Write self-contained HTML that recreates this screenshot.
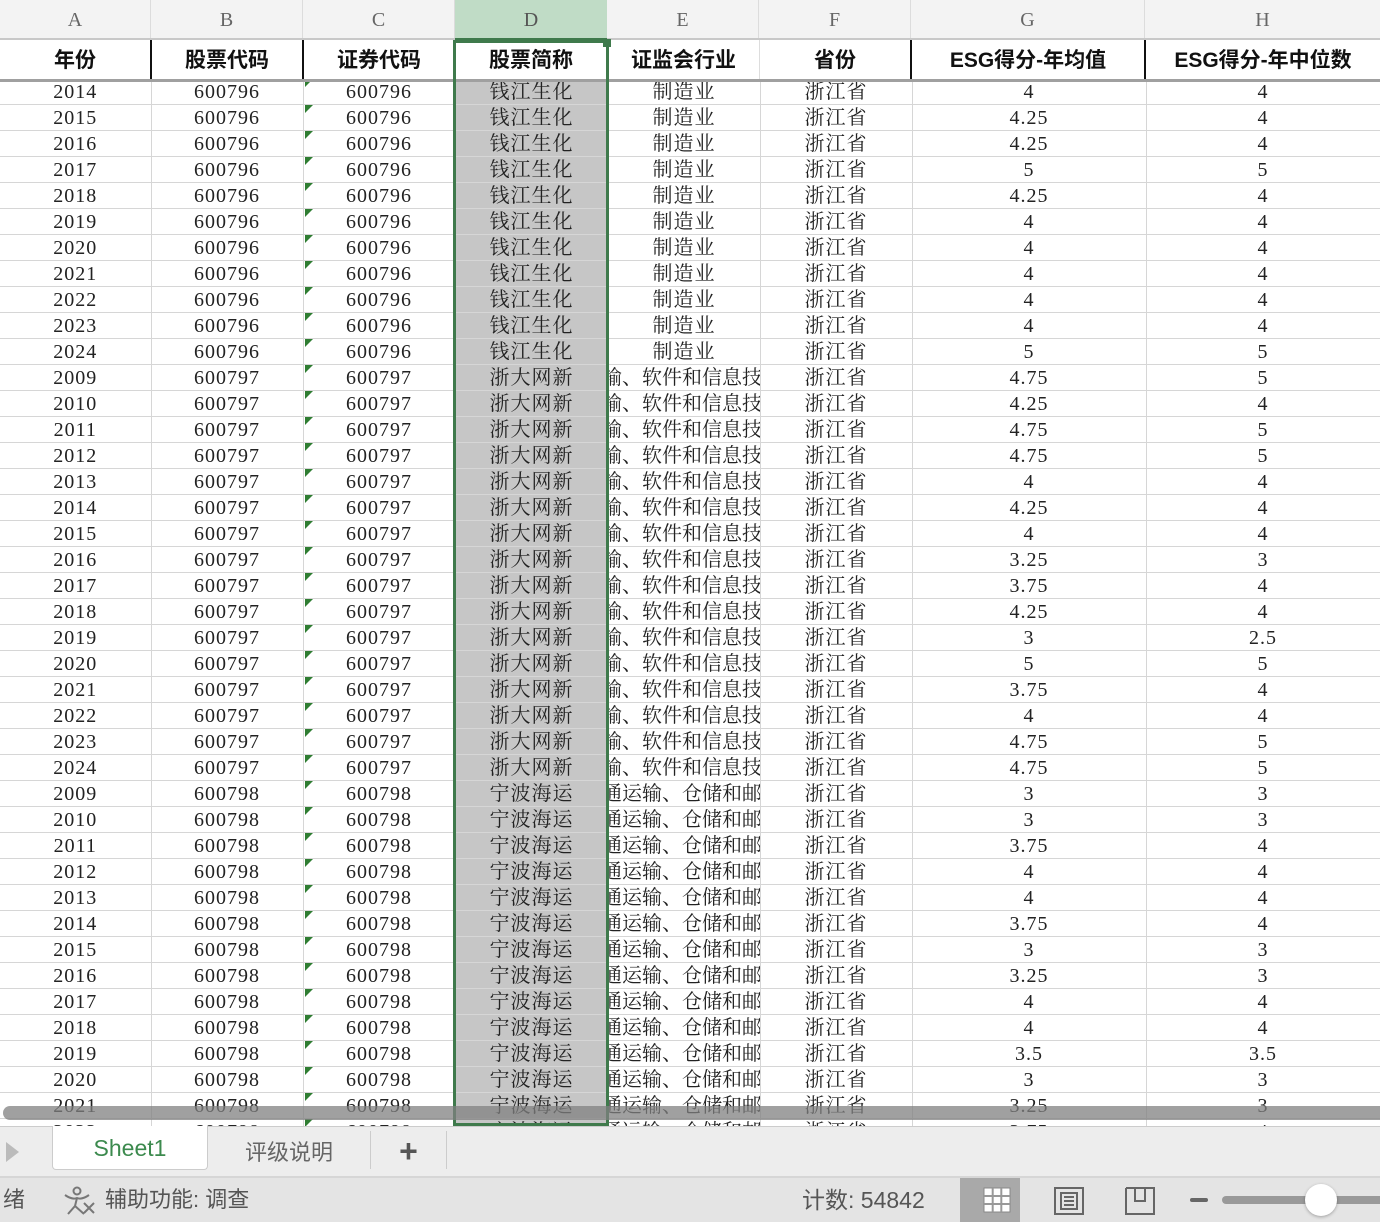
<!DOCTYPE html>
<html><head><meta charset="utf-8">
<style>
html,body{margin:0;padding:0;width:1380px;height:1222px;overflow:hidden;background:#fff;position:relative;font-family:"Liberation Serif","Noto Serif CJK SC",serif;}
.colhdr{position:absolute;left:0;top:0;width:1380px;height:40px;background:#f3f3f3;border-bottom:2px solid #c8c8c8;box-sizing:border-box;}
.colhdr div{position:absolute;top:0;height:38px;line-height:40px;text-align:center;color:#666;font-size:20px;border-right:1px solid #dcdcdc;box-sizing:border-box;}
.hdr{position:absolute;left:0;top:40px;width:1380px;height:42px;border-bottom:3px solid #a0a0a0;box-sizing:border-box;background:#fff;}
.hdr div{position:absolute;top:0;height:39px;line-height:42px;text-align:center;font-family:"Liberation Sans","Noto Sans CJK SC",sans-serif;font-weight:bold;font-size:21px;color:#111;border-right:2px solid #111;box-sizing:border-box;}
.data{position:absolute;left:0;top:82px;width:1380px;height:1044px;overflow:hidden;}
table{border-collapse:collapse;table-layout:fixed;margin-top:-3px;width:1380px;}
td{height:23px;padding:2px 0 0 0;border-bottom:1px solid #d6d6d6;border-right:1px solid #d6d6d6;text-align:center;font-size:20px;line-height:23px;color:#222;white-space:nowrap;overflow:hidden;position:relative;letter-spacing:1px;}
td.c:before{content:"";position:absolute;left:1px;top:0;width:0;height:0;border-top:8px solid #2f7d32;border-right:8px solid transparent;}
td.d{background:#c6c6c6;}
td.e span{position:absolute;left:50%;top:2px;margin-left:8px;transform:translateX(-50%);white-space:nowrap;letter-spacing:0;}
.sel{position:absolute;left:453px;top:40px;width:156px;height:1086px;border:3px solid #3f7a4c;box-sizing:border-box;}
.dh{position:absolute;left:455px;top:0;width:152px;height:40px;background:#c0dcc6;color:#555;font-size:20px;text-align:center;line-height:40px;border-bottom:2px solid #3f7a4c;box-sizing:border-box;}
.handle{position:absolute;left:603px;top:39px;width:8px;height:8px;background:#3f7a4c;}
.scroll{position:absolute;left:3px;top:1106px;width:1390px;height:14px;border-radius:7px;background:rgba(128,128,128,0.75);}
.tabs{position:absolute;left:0;top:1126px;width:1380px;height:52px;background:#ededed;border-top:1px solid #ccc;border-bottom:2px solid #d6d6d6;box-sizing:border-box;font-family:"Liberation Sans","Noto Sans CJK SC",sans-serif;}
.status{position:absolute;left:0;top:1178px;width:1380px;height:44px;background:#e4e4e4;font-family:"Liberation Sans","Noto Sans CJK SC",sans-serif;color:#555;font-size:22px;}
</style></head><body>
<div class="colhdr">
<div style="left:0;width:151px">A</div><div style="left:151px;width:152px">B</div><div style="left:303px;width:152px">C</div><div style="left:455px;width:152px">D</div><div style="left:607px;width:152px">E</div><div style="left:759px;width:152px">F</div><div style="left:911px;width:234px">G</div><div style="left:1145px;width:235px;border:none">H</div>
</div>
<div class="dh">D</div>
<div class="hdr">
<div style="left:0;width:152px">年份</div><div style="left:152px;width:152px">股票代码</div><div style="left:304px;width:152px">证券代码</div><div style="left:456px;width:152px;border-right-color:#3f7a4c">股票简称</div><div style="left:608px;width:152px;border-right:1px solid #ddd">证监会行业</div><div style="left:760px;width:152px">省份</div><div style="left:912px;width:234px">ESG得分-年均值</div><div style="left:1146px;width:234px;border:none">ESG得分-年中位数</div>
</div>
<div class="data">
<table>
<colgroup><col style="width:151px"><col style="width:152px"><col style="width:152px"><col style="width:153px"><col style="width:152px"><col style="width:152px"><col style="width:234px"><col style="width:234px"></colgroup>
<tr><td>2014</td><td>600796</td><td class="c">600796</td><td class="d">钱江生化</td><td>制造业</td><td>浙江省</td><td>4</td><td>4</td></tr>
<tr><td>2015</td><td>600796</td><td class="c">600796</td><td class="d">钱江生化</td><td>制造业</td><td>浙江省</td><td>4.25</td><td>4</td></tr>
<tr><td>2016</td><td>600796</td><td class="c">600796</td><td class="d">钱江生化</td><td>制造业</td><td>浙江省</td><td>4.25</td><td>4</td></tr>
<tr><td>2017</td><td>600796</td><td class="c">600796</td><td class="d">钱江生化</td><td>制造业</td><td>浙江省</td><td>5</td><td>5</td></tr>
<tr><td>2018</td><td>600796</td><td class="c">600796</td><td class="d">钱江生化</td><td>制造业</td><td>浙江省</td><td>4.25</td><td>4</td></tr>
<tr><td>2019</td><td>600796</td><td class="c">600796</td><td class="d">钱江生化</td><td>制造业</td><td>浙江省</td><td>4</td><td>4</td></tr>
<tr><td>2020</td><td>600796</td><td class="c">600796</td><td class="d">钱江生化</td><td>制造业</td><td>浙江省</td><td>4</td><td>4</td></tr>
<tr><td>2021</td><td>600796</td><td class="c">600796</td><td class="d">钱江生化</td><td>制造业</td><td>浙江省</td><td>4</td><td>4</td></tr>
<tr><td>2022</td><td>600796</td><td class="c">600796</td><td class="d">钱江生化</td><td>制造业</td><td>浙江省</td><td>4</td><td>4</td></tr>
<tr><td>2023</td><td>600796</td><td class="c">600796</td><td class="d">钱江生化</td><td>制造业</td><td>浙江省</td><td>4</td><td>4</td></tr>
<tr><td>2024</td><td>600796</td><td class="c">600796</td><td class="d">钱江生化</td><td>制造业</td><td>浙江省</td><td>5</td><td>5</td></tr>
<tr><td>2009</td><td>600797</td><td class="c">600797</td><td class="d">浙大网新</td><td class="e"><span>信息传输、软件和信息技术服务业</span></td><td>浙江省</td><td>4.75</td><td>5</td></tr>
<tr><td>2010</td><td>600797</td><td class="c">600797</td><td class="d">浙大网新</td><td class="e"><span>信息传输、软件和信息技术服务业</span></td><td>浙江省</td><td>4.25</td><td>4</td></tr>
<tr><td>2011</td><td>600797</td><td class="c">600797</td><td class="d">浙大网新</td><td class="e"><span>信息传输、软件和信息技术服务业</span></td><td>浙江省</td><td>4.75</td><td>5</td></tr>
<tr><td>2012</td><td>600797</td><td class="c">600797</td><td class="d">浙大网新</td><td class="e"><span>信息传输、软件和信息技术服务业</span></td><td>浙江省</td><td>4.75</td><td>5</td></tr>
<tr><td>2013</td><td>600797</td><td class="c">600797</td><td class="d">浙大网新</td><td class="e"><span>信息传输、软件和信息技术服务业</span></td><td>浙江省</td><td>4</td><td>4</td></tr>
<tr><td>2014</td><td>600797</td><td class="c">600797</td><td class="d">浙大网新</td><td class="e"><span>信息传输、软件和信息技术服务业</span></td><td>浙江省</td><td>4.25</td><td>4</td></tr>
<tr><td>2015</td><td>600797</td><td class="c">600797</td><td class="d">浙大网新</td><td class="e"><span>信息传输、软件和信息技术服务业</span></td><td>浙江省</td><td>4</td><td>4</td></tr>
<tr><td>2016</td><td>600797</td><td class="c">600797</td><td class="d">浙大网新</td><td class="e"><span>信息传输、软件和信息技术服务业</span></td><td>浙江省</td><td>3.25</td><td>3</td></tr>
<tr><td>2017</td><td>600797</td><td class="c">600797</td><td class="d">浙大网新</td><td class="e"><span>信息传输、软件和信息技术服务业</span></td><td>浙江省</td><td>3.75</td><td>4</td></tr>
<tr><td>2018</td><td>600797</td><td class="c">600797</td><td class="d">浙大网新</td><td class="e"><span>信息传输、软件和信息技术服务业</span></td><td>浙江省</td><td>4.25</td><td>4</td></tr>
<tr><td>2019</td><td>600797</td><td class="c">600797</td><td class="d">浙大网新</td><td class="e"><span>信息传输、软件和信息技术服务业</span></td><td>浙江省</td><td>3</td><td>2.5</td></tr>
<tr><td>2020</td><td>600797</td><td class="c">600797</td><td class="d">浙大网新</td><td class="e"><span>信息传输、软件和信息技术服务业</span></td><td>浙江省</td><td>5</td><td>5</td></tr>
<tr><td>2021</td><td>600797</td><td class="c">600797</td><td class="d">浙大网新</td><td class="e"><span>信息传输、软件和信息技术服务业</span></td><td>浙江省</td><td>3.75</td><td>4</td></tr>
<tr><td>2022</td><td>600797</td><td class="c">600797</td><td class="d">浙大网新</td><td class="e"><span>信息传输、软件和信息技术服务业</span></td><td>浙江省</td><td>4</td><td>4</td></tr>
<tr><td>2023</td><td>600797</td><td class="c">600797</td><td class="d">浙大网新</td><td class="e"><span>信息传输、软件和信息技术服务业</span></td><td>浙江省</td><td>4.75</td><td>5</td></tr>
<tr><td>2024</td><td>600797</td><td class="c">600797</td><td class="d">浙大网新</td><td class="e"><span>信息传输、软件和信息技术服务业</span></td><td>浙江省</td><td>4.75</td><td>5</td></tr>
<tr><td>2009</td><td>600798</td><td class="c">600798</td><td class="d">宁波海运</td><td class="e"><span>交通运输、仓储和邮政业</span></td><td>浙江省</td><td>3</td><td>3</td></tr>
<tr><td>2010</td><td>600798</td><td class="c">600798</td><td class="d">宁波海运</td><td class="e"><span>交通运输、仓储和邮政业</span></td><td>浙江省</td><td>3</td><td>3</td></tr>
<tr><td>2011</td><td>600798</td><td class="c">600798</td><td class="d">宁波海运</td><td class="e"><span>交通运输、仓储和邮政业</span></td><td>浙江省</td><td>3.75</td><td>4</td></tr>
<tr><td>2012</td><td>600798</td><td class="c">600798</td><td class="d">宁波海运</td><td class="e"><span>交通运输、仓储和邮政业</span></td><td>浙江省</td><td>4</td><td>4</td></tr>
<tr><td>2013</td><td>600798</td><td class="c">600798</td><td class="d">宁波海运</td><td class="e"><span>交通运输、仓储和邮政业</span></td><td>浙江省</td><td>4</td><td>4</td></tr>
<tr><td>2014</td><td>600798</td><td class="c">600798</td><td class="d">宁波海运</td><td class="e"><span>交通运输、仓储和邮政业</span></td><td>浙江省</td><td>3.75</td><td>4</td></tr>
<tr><td>2015</td><td>600798</td><td class="c">600798</td><td class="d">宁波海运</td><td class="e"><span>交通运输、仓储和邮政业</span></td><td>浙江省</td><td>3</td><td>3</td></tr>
<tr><td>2016</td><td>600798</td><td class="c">600798</td><td class="d">宁波海运</td><td class="e"><span>交通运输、仓储和邮政业</span></td><td>浙江省</td><td>3.25</td><td>3</td></tr>
<tr><td>2017</td><td>600798</td><td class="c">600798</td><td class="d">宁波海运</td><td class="e"><span>交通运输、仓储和邮政业</span></td><td>浙江省</td><td>4</td><td>4</td></tr>
<tr><td>2018</td><td>600798</td><td class="c">600798</td><td class="d">宁波海运</td><td class="e"><span>交通运输、仓储和邮政业</span></td><td>浙江省</td><td>4</td><td>4</td></tr>
<tr><td>2019</td><td>600798</td><td class="c">600798</td><td class="d">宁波海运</td><td class="e"><span>交通运输、仓储和邮政业</span></td><td>浙江省</td><td>3.5</td><td>3.5</td></tr>
<tr><td>2020</td><td>600798</td><td class="c">600798</td><td class="d">宁波海运</td><td class="e"><span>交通运输、仓储和邮政业</span></td><td>浙江省</td><td>3</td><td>3</td></tr>
<tr><td>2021</td><td>600798</td><td class="c">600798</td><td class="d">宁波海运</td><td class="e"><span>交通运输、仓储和邮政业</span></td><td>浙江省</td><td>3.25</td><td>3</td></tr>
<tr><td>2022</td><td>600798</td><td class="c">600798</td><td class="d">宁波海运</td><td class="e"><span>交通运输、仓储和邮政业</span></td><td>浙江省</td><td>3.75</td><td>4</td></tr>
</table>
</div>
<div class="sel"></div>
<div class="handle"></div>
<div class="scroll"></div>
<div class="tabs">
<div style="position:absolute;left:6px;top:15px;width:0;height:0;border-left:13px solid #bbb;border-top:10px solid transparent;border-bottom:10px solid transparent;"></div>
<div style="position:absolute;left:52px;top:-1px;width:156px;height:44px;background:#fff;border:1px solid #ccc;border-top:none;border-radius:0 0 4px 4px;box-sizing:border-box;text-align:center;line-height:44px;color:#3c8a4e;font-size:23px;">Sheet1</div>
<div style="position:absolute;left:208px;top:0;width:162px;height:50px;line-height:52px;text-align:center;color:#666;font-size:22px;">评级说明</div>
<div style="position:absolute;left:370px;top:4px;width:1px;height:38px;background:#ccc"></div>
<div style="position:absolute;left:371px;top:0;width:75px;height:48px;line-height:48px;text-align:center;color:#555;font-size:32px;font-weight:bold;">+</div>
<div style="position:absolute;left:446px;top:4px;width:1px;height:38px;background:#ccc"></div>
</div>
<div class="status">
<div style="position:absolute;left:3px;top:0;line-height:44px;">绪</div>
<svg style="position:absolute;left:62px;top:8px" width="34" height="30" viewBox="0 0 34 30" fill="none" stroke="#777" stroke-width="2"><circle cx="15" cy="5" r="3.5"/><path d="M3 9 Q10 14 15 12 Q20 14 27 9"/><path d="M15 12 L13 20 L6 28"/><path d="M13 20 L22 28"/><path d="M22 17 L32 27 M32 17 L22 27"/></svg>
<div style="position:absolute;left:105px;top:0;line-height:44px;">辅助功能: 调查</div>
<div style="position:absolute;left:802px;top:0;line-height:44px;font-size:23px;">计数: 54842</div>
<div style="position:absolute;left:960px;top:0;width:60px;height:44px;background:#a9a9a9;"></div>
<svg style="position:absolute;left:983px;top:9px" width="28" height="26" viewBox="0 0 28 26"><rect x="1" y="1" width="26" height="24" fill="#fff" stroke="#888"/><path d="M1 9H27M1 17H27M9.7 1V25M18.3 1V25" stroke="#999" stroke-width="2"/></svg>
<svg style="position:absolute;left:1054px;top:9px" width="30" height="28" viewBox="0 0 30 28" fill="none" stroke="#666" stroke-width="2"><rect x="1" y="1" width="28" height="26"/><rect x="7" y="6" width="16" height="16"/><path d="M10 10H20M10 14H20M10 18H20"/></svg>
<svg style="position:absolute;left:1125px;top:9px" width="30" height="28" viewBox="0 0 30 28" fill="none" stroke="#666" stroke-width="2"><path d="M1 1V27H29V1H1M10 1V14H20V1"/></svg>
<div style="position:absolute;left:1190px;top:20px;width:18px;height:4px;background:#666;border-radius:2px;"></div>
<div style="position:absolute;left:1222px;top:18px;width:170px;height:8px;background:#999;border-radius:4px;"></div>
<div style="position:absolute;left:1305px;top:6px;width:32px;height:32px;background:#fff;border-radius:50%;box-shadow:0 1px 3px rgba(0,0,0,0.3);"></div>
</div>
</body></html>
